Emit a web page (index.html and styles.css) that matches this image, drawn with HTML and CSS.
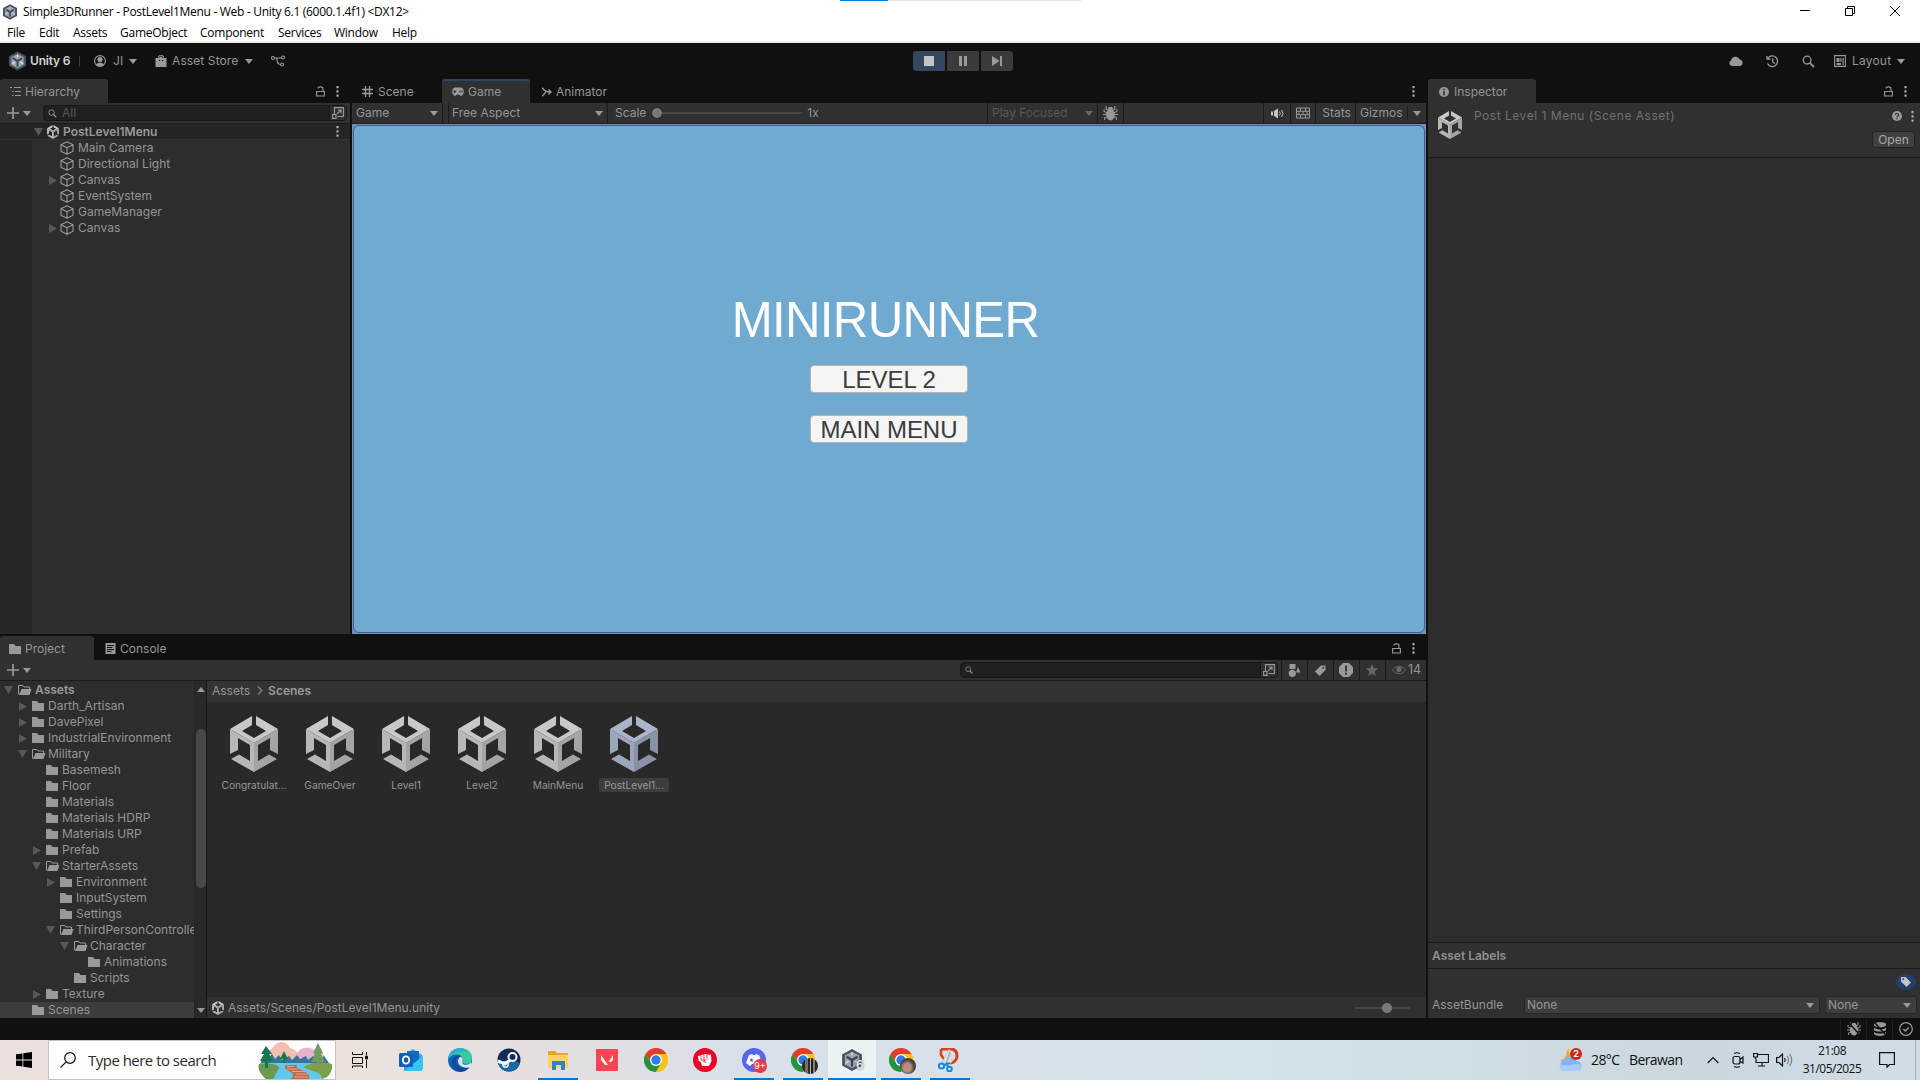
FILE: index.html
```html
<!DOCTYPE html>
<html lang="en">
<head>
<meta charset="utf-8">
<title>Simple3DRunner - PostLevel1Menu</title>
<link rel="stylesheet" href="styles.css">
</head>
<body>
<svg class="defs" aria-hidden="true">
  <symbol id="unity" viewBox="0 0 48 56"><path class="f-top" d="M0 13 22 0V9L12 15 24 22 36 15 26 9V0L48 13 24 27Z"/><path class="f-left" d="M0 13 24 27V56L1 43 9 38.500 20 45V29L8 22V34L0 38Z"/><path class="f-right" d="M48 13 24 27V56L47 43 39 38.500 28 45V29L40 22V34L48 38Z"/></symbol>
  <symbol id="hub" viewBox="0 0 18 20"><path d="M9 0 18 5V15L9 20 0 15V5Z" fill="#49535e"/><path d="M9 2.500 15.500 6V14L9 17.500 2.500 14V6Z" fill="#9aa5b0"/><path d="M9 10V16M9 10 4 7M9 10 14 7" stroke="#3c4650" stroke-width="2"/><path d="M9 3v3M3 13l3-2M15 13l-3-2" stroke="#dde4ea" stroke-width="1.200"/></symbol>
  <symbol id="down" viewBox="0 0 8 5"><path d="M0 0H8L4 5Z" fill="currentColor"/></symbol>
  <symbol id="right" viewBox="0 0 8 9"><path d="M0 0V9L8 4.500Z" fill="currentColor"/></symbol>
  <symbol id="open" viewBox="0 0 9 8"><path d="M0 0H9L4.500 8Z" fill="currentColor"/></symbol>
  <symbol id="kebab" viewBox="0 0 3 11"><path d="M0.500 0h2v2.300h-2zM0.500 4.200h2v2.300h-2zM0.500 8.500h2v2.300h-2z" fill="currentColor"/></symbol>
  <symbol id="lock" viewBox="0 0 9 11"><path d="M.6 5.500H8.400V10H.6ZM2 2.500C2 .3 7 .3 7 2.500V5.500" fill="none" stroke="currentColor" stroke-width="1.100"/></symbol>
  <symbol id="plus" viewBox="0 0 12 12"><path d="M6 0V12M0 6H12" stroke="currentColor" stroke-width="1.700"/></symbol>
  <symbol id="cube" viewBox="0 0 14 14"><path d="M7 .7 13 3.700V10.300L7 13.300 1 10.300V3.700ZM1 3.700 7 6.700 13 3.700M7 6.700V13.300" fill="none" stroke="currentColor" stroke-width="1.100" stroke-linejoin="round"/></symbol>
  <symbol id="folder" viewBox="0 0 12 10"><path d="M0 0H5L6.500 2H12V10H0Z" fill="currentColor"/></symbol>
  <symbol id="folder-open" viewBox="0 0 14 10"><path d="M.5 9.500V.5H5L6 2H11.500V4" fill="none" stroke="currentColor"/><path d="M3.500 4H13.500L11.500 10H1Z" fill="currentColor"/></symbol>
  <symbol id="picker" viewBox="0 0 12 12"><path d="M2.500 7V.6H11.400V9.500H5.500M.6 7.500H4V11.400H.6ZM5 7 8.700 3.300M5.700 3H9V6.300" fill="none" stroke="currentColor" stroke-width="1.100"/></symbol>
  <symbol id="mag" viewBox="0 0 14 14"><circle cx="5.500" cy="5.500" r="4.200" fill="none" stroke="currentColor" stroke-width="1.400"/><path d="M8.500 8.500 13 13" stroke="currentColor" stroke-width="2"/></symbol>
  <symbol id="user" viewBox="0 0 12 12"><circle cx="6" cy="6" r="5.400" fill="none" stroke="currentColor" stroke-width="1.100"/><circle cx="6" cy="4.600" r="2.600" fill="currentColor"/><path d="M2 9.500C3 7 9 7 10 9.500 8 12 4 12 2 9.500Z" fill="currentColor"/></symbol>
  <symbol id="bag" viewBox="0 0 11 12"><path d="M0 3H2.500V2C2.500-.6 8.500-.6 8.500 2V3H11V12H0Z" fill="currentColor"/><path d="M3.500 3C3.500.6 7.500.6 7.500 3" stroke="#101010" fill="none"/><path d="M3.500 5.500h1.200M6.500 5.500h1.200" stroke="#101010"/></symbol>
  <symbol id="branch" viewBox="0 0 14 12"><g fill="none" stroke="currentColor" stroke-width="1.100"><circle cx="2" cy="3" r="1.500"/><circle cx="12" cy="2.500" r="1.500"/><circle cx="11" cy="9.500" r="1.500"/><path d="M3.500 3H10.500M5.500 3 7 8.500 9.500 9.500"/></g></symbol>
  <symbol id="list" viewBox="0 0 11 9"><path d="M0 .5H2M4 .5H11M2 4.500H3.500M5 4.500H11M2 8.500H3.500M5 8.500H11" stroke="currentColor" stroke-width="1.200"/></symbol>
  <symbol id="grid" viewBox="0 0 11 11"><path d="M3.500 0V11M7.500 0V11M0 3.500H11M0 7.500H11" stroke="currentColor" stroke-width="1.300"/></symbol>
  <symbol id="pad" viewBox="0 0 14 9"><path d="M3.500 0H10.500A3.500 4.500 0 0 1 10.500 8.500C9 8.500 9 7 7 7S5 8.500 3.500 8.500A3.500 4.500 0 0 1 3.500 0Z" fill="currentColor"/><path d="M2.200 4.200H5.200M3.700 2.700V5.700M9 3v2M11 3v2" stroke="#303030" stroke-width="1.100"/></symbol>
  <symbol id="anim" viewBox="0 0 10 10"><path d="M0 .8C3 4 4 5 9 5M0 9.200C2 8 2.500 6 4 5M6.500 2.500 9 5 6.500 7.500" fill="none" stroke="currentColor" stroke-width="1.300"/></symbol>
  <symbol id="bug" viewBox="0 0 14 14"><ellipse cx="7" cy="8" rx="4" ry="5.500" fill="currentColor"/><path d="M4.500 3C5 0 9 0 9.500 3Z" fill="currentColor"/><path d="M3 0V3L5 4M11 0V3L9 4M0 8H14M1 3V5L4 6.500M13 3V5L10 6.500M1.500 13V11L4 10M12.500 13V11L10 10" stroke="currentColor" fill="none"/></symbol>
  <symbol id="sound" viewBox="0 0 13 10"><path d="M0 3H2V7H0ZM3 2.500 7 0V10L3 7.500Z" fill="currentColor"/><path d="M8.500 3Q10 5 8.500 7M10.500 1.500Q13.500 5 10.500 8.500" fill="none" stroke="currentColor"/></symbol>
  <symbol id="keys" viewBox="0 0 14 11"><path d="M.5 .5H13.500V10.500H.5ZM.5 3.800H13.500M.5 7.200H13.500M4.500 .5V3.800M9.500 .5V3.800M3 3.800V7.200M7 3.800V7.200M11 3.800V7.200M4.500 7.200V10.500M9.500 7.200V10.500" fill="none" stroke="currentColor"/></symbol>
  <symbol id="cloud" viewBox="0 0 14 10"><path d="M3 10A3 3 0 0 1 2.200 4.300 4.500 4.500 0 0 1 10.700 3.500 3.300 3.300 0 0 1 11 10Z" fill="currentColor"/></symbol>
  <symbol id="history" viewBox="0 0 13 12"><path d="M1.700 3A5.300 5.300 0 1 1 1.500 8M1 .5V3.500H4.500M6.700 3V6.500L9 8" fill="none" stroke="currentColor" stroke-width="1.300"/></symbol>
  <symbol id="layout" viewBox="0 0 12 12"><path d="M.6 .6H11.400V11.400H.6Z" fill="none" stroke="currentColor" stroke-width="1.100"/><path d="M2.500 3H5.500V7H2.500ZM2.500 8H7V10H2.500ZM6.300 3H7.500V7H6.300ZM8.500 3H9.700V10H8.500Z" fill="currentColor"/></symbol>
  <symbol id="info" viewBox="0 0 10 10"><circle cx="5" cy="5" r="5" fill="currentColor"/><path d="M5 1.800V3.200M5 4.200V8.200" stroke="#303030" stroke-width="1.600"/></symbol>
  <symbol id="help" viewBox="0 0 10 10"><circle cx="5" cy="5" r="5" fill="currentColor"/><path d="M3.300 4C3.300 2 6.700 2 6.700 4 6.700 5 5 5 5 6.200M5 7V8.200" stroke="#303030" stroke-width="1.200" fill="none"/></symbol>
  <symbol id="console" viewBox="0 0 10 11"><path d="M0 0H10V11H0Z" fill="currentColor"/><path d="M1.500 2.500H8.500M1.500 4.500H7M1.500 6.500H8.500M1.500 8.500H6" stroke="#101010"/></symbol>
  <symbol id="shapes" viewBox="0 0 12 13"><path d="M1 0H7V5H1ZM9.500 3 12 8.500H7.500Z" fill="currentColor"/><circle cx="3.800" cy="9.300" r="3.600" fill="currentColor"/></symbol>
  <symbol id="tag" viewBox="0 0 11 11"><path d="M0 6.500 6 .5H10.500V5L4.500 11Z" fill="currentColor"/><circle cx="8.300" cy="2.700" r="1" fill="#333"/></symbol>
  <symbol id="alert" viewBox="0 0 14 14"><path d="M4 0H10L14 4V10L10 14H4L0 10V4Z" fill="currentColor"/><path d="M7 2.500V8.500M7 9.800V11.800" stroke="#303030" stroke-width="1.800"/></symbol>
  <symbol id="star" viewBox="0 0 12 12"><path d="M6 0 7.700 4.300 12 4.600 8.700 7.500 9.700 12 6 9.500 2.300 12 3.300 7.500 0 4.600 4.300 4.300Z" fill="currentColor"/></symbol>
  <symbol id="eye" viewBox="0 0 14 9"><path d="M.6 4.500C3.500-.4 10.500-.4 13.400 4.500 10.500 9.400 3.500 9.400.6 4.500Z" fill="none" stroke="currentColor"/><circle cx="7" cy="4" r="2.700" fill="currentColor"/></symbol>
  <symbol id="db" viewBox="0 0 14 14"><path d="M1 2C1-.3 13-.3 13 2V3.500C11 6 3 6 1 3.500ZM1 5.500C3 8 11 8 13 5.500V8C11 10 3 10 1 8ZM1 10C3 12 11 12 13 10V12C11 14.500 3 14.500 1 12Z" fill="currentColor"/><path d="M1 0 14 14" stroke="#101010" stroke-width="1.500"/></symbol>
  <symbol id="check" viewBox="0 0 14 14"><circle cx="7" cy="7" r="6.300" fill="none" stroke="currentColor" stroke-width="1.200"/><path d="M4.300 7 6.300 9 9.700 5.500" fill="none" stroke="currentColor" stroke-width="1.500"/></symbol>
  <symbol id="chrome" viewBox="0 0 24 24"><circle cx="12" cy="12" r="12" fill="#fbc116"/><path d="M1.600 6A12 12 0 0 1 22.400 6H12L6.800 15Z" fill="#e33b2e"/><path d="M1.600 6A12 12 0 0 0 12 24L17.200 15 12 12H5Z" fill="#229342"/><path d="M12 6H22.400A12 12 0 0 1 12 24L17.200 15Z" fill="#fbc116"/><circle cx="12" cy="12" r="6" fill="#fff"/><circle cx="12" cy="12" r="4.700" fill="#2d7de9"/></symbol>
</svg>

<header class="window-top">
  <div class="progress"><i></i></div>
  <div class="titlebar">
    <svg class="app-icon"><use href="#hub"/></svg>
    <span class="title">Simple3DRunner - PostLevel1Menu - Web - Unity 6.1 (6000.1.4f1) &lt;DX12&gt;</span>
    <div class="window-buttons">
      <svg viewBox="0 0 10 10"><path d="M0 4.500H10"/></svg>
      <svg viewBox="0 0 10 10"><path d="M.5 2.500H7.500V9.500H.5ZM2.500 2.500V.5H9.500V7.500H7.500"/></svg>
      <svg viewBox="0 0 10 10"><path d="M0 0 10 10M10 0 0 10"/></svg>
    </div>
  </div>
  <nav class="menubar"><span>File</span><span>Edit</span><span>Assets</span><span>GameObject</span><span>Component</span><span>Services</span><span>Window</span><span>Help</span></nav>
</header>

<div class="toolbar">
  <div class="tool-left">
    <svg class="i-hub"><use href="#hub"/></svg><b>Unity 6</b><i class="bar"></i>
    <svg class="i12"><use href="#user"/></svg><span>JI</span><svg class="down"><use href="#down"/></svg>
    <svg class="i12"><use href="#bag"/></svg><span>Asset Store</span><svg class="down"><use href="#down"/></svg>
    <svg class="i14"><use href="#branch"/></svg>
  </div>
  <div class="play">
    <button class="on"><svg viewBox="0 0 10 10"><rect width="10" height="10" rx=".5"/></svg></button>
    <button><svg viewBox="0 0 10 10"><path d="M1 0H4V10H1ZM6 0H9V10H6Z"/></svg></button>
    <button><svg viewBox="0 0 10 10"><path d="M0 0 7.500 5 0 10ZM8 0H10V10H8Z"/></svg></button>
  </div>
  <div class="tool-right">
    <svg class="i14"><use href="#cloud"/></svg><svg class="i13"><use href="#history"/></svg><svg class="i13"><use href="#mag"/></svg>
    <svg class="i12"><use href="#layout"/></svg><span>Layout</span><svg class="down"><use href="#down"/></svg>
  </div>
</div>

<main class="editor">
  <div class="left-area">
    <div class="upper">
      <section class="hierarchy">
        <div class="tabs">
          <div class="tab tab-hier"><svg class="i11"><use href="#list"/></svg>Hierarchy</div>
          <div class="tab-tools"><svg class="lock"><use href="#lock"/></svg><svg class="kebab"><use href="#kebab"/></svg></div>
        </div>
        <div class="subbar">
          <svg class="plus"><use href="#plus"/></svg><svg class="down"><use href="#down"/></svg>
          <div class="search"><svg class="i9"><use href="#mag"/></svg><span>All</span><div class="pick"><svg class="i12"><use href="#picker"/></svg></div></div>
        </div>
        <div class="scene-row"><svg class="opened"><use href="#open"/></svg><svg class="unity-s"><use href="#unity"/></svg><b>PostLevel1Menu</b><svg class="kebab"><use href="#kebab"/></svg></div>
        <div class="objects">
          <div class="gutter"></div>
          <ul>
            <li><svg class="i14"><use href="#cube"/></svg>Main Camera</li>
            <li><svg class="i14"><use href="#cube"/></svg>Directional Light</li>
            <li class="parent"><svg class="closed"><use href="#right"/></svg><svg class="i14"><use href="#cube"/></svg>Canvas</li>
            <li><svg class="i14"><use href="#cube"/></svg>EventSystem</li>
            <li><svg class="i14"><use href="#cube"/></svg>GameManager</li>
            <li class="parent"><svg class="closed"><use href="#right"/></svg><svg class="i14"><use href="#cube"/></svg>Canvas</li>
          </ul>
        </div>
      </section>

      <section class="game">
        <div class="tabs">
          <div class="tab tab-scene"><svg class="i11"><use href="#grid"/></svg>Scene</div>
          <div class="tab tab-game"><svg class="i14"><use href="#pad"/></svg>Game</div>
          <div class="tab tab-anim"><svg class="i10"><use href="#anim"/></svg>Animator</div>
          <div class="tab-tools"><svg class="kebab"><use href="#kebab"/></svg></div>
        </div>
        <div class="game-bar">
          <div class="cell c-game">Game<svg class="down"><use href="#down"/></svg></div>
          <div class="cell c-gap"></div>
          <div class="cell c-aspect">Free Aspect<svg class="down"><use href="#down"/></svg></div>
          <div class="cell c-scale">Scale<div class="slider"></div>1x</div>
          <div class="cell c-play">Play Focused<svg class="down"><use href="#down"/></svg></div>
          <div class="cell c-bug"><svg class="i15"><use href="#bug"/></svg></div>
          <div class="cell c-space"></div>
          <div class="cell c-icon"><svg class="i13 bright"><use href="#sound"/></svg></div>
          <div class="cell c-keys"><svg class="i14"><use href="#keys"/></svg></div>
          <div class="cell c-stats">Stats</div>
          <div class="cell c-giz">Gizmos<i></i><svg class="down"><use href="#down"/></svg></div>
        </div>
        <div class="viewport">
          <div class="screen">
            <h1>MINIRUNNER</h1>
            <button>LEVEL 2</button>
            <button>MAIN MENU</button>
          </div>
        </div>
      </section>
    </div>

    <section class="project">
      <div class="tabs">
        <div class="tab tab-project"><svg class="folder"><use href="#folder"/></svg>Project</div>
        <div class="tab tab-console"><svg class="i11"><use href="#console"/></svg>Console</div>
        <div class="tab-tools"><svg class="lock"><use href="#lock"/></svg><svg class="kebab"><use href="#kebab"/></svg></div>
      </div>
      <div class="subbar">
        <svg class="plus"><use href="#plus"/></svg><svg class="down"><use href="#down"/></svg>
        <div class="search wide"><svg class="i8"><use href="#mag"/></svg><div class="pick"><svg class="i12"><use href="#picker"/></svg></div></div>
        <div class="filters">
          <div><svg class="i13"><use href="#shapes"/></svg></div><div><svg class="i11"><use href="#tag"/></svg></div><div><svg class="i14"><use href="#alert"/></svg></div><div class="dim"><svg class="i12"><use href="#star"/></svg></div><div class="count"><svg class="i14"><use href="#eye"/></svg>14</div>
        </div>
      </div>
      <div class="project-body">
        <ul class="tree">
          <li class="d0"><svg class="opened"><use href="#open"/></svg><svg class="folder-open"><use href="#folder-open"/></svg><b>Assets</b></li>
          <li class="d1"><svg class="closed"><use href="#right"/></svg><svg class="folder"><use href="#folder"/></svg>Darth_Artisan</li>
          <li class="d1"><svg class="closed"><use href="#right"/></svg><svg class="folder"><use href="#folder"/></svg>DavePixel</li>
          <li class="d1"><svg class="closed"><use href="#right"/></svg><svg class="folder"><use href="#folder"/></svg>IndustrialEnvironment</li>
          <li class="d1"><svg class="opened"><use href="#open"/></svg><svg class="folder-open"><use href="#folder-open"/></svg>Military</li>
          <li class="d2"><i></i><svg class="folder"><use href="#folder"/></svg>Basemesh</li>
          <li class="d2"><i></i><svg class="folder"><use href="#folder"/></svg>Floor</li>
          <li class="d2"><i></i><svg class="folder"><use href="#folder"/></svg>Materials</li>
          <li class="d2"><i></i><svg class="folder"><use href="#folder"/></svg>Materials HDRP</li>
          <li class="d2"><i></i><svg class="folder"><use href="#folder"/></svg>Materials URP</li>
          <li class="d2"><svg class="closed"><use href="#right"/></svg><svg class="folder"><use href="#folder"/></svg>Prefab</li>
          <li class="d2"><svg class="opened"><use href="#open"/></svg><svg class="folder-open"><use href="#folder-open"/></svg>StarterAssets</li>
          <li class="d3"><svg class="closed"><use href="#right"/></svg><svg class="folder"><use href="#folder"/></svg>Environment</li>
          <li class="d3"><i></i><svg class="folder"><use href="#folder"/></svg>InputSystem</li>
          <li class="d3"><i></i><svg class="folder"><use href="#folder"/></svg>Settings</li>
          <li class="d3"><svg class="opened"><use href="#open"/></svg><svg class="folder-open"><use href="#folder-open"/></svg>ThirdPersonController</li>
          <li class="d4"><svg class="opened"><use href="#open"/></svg><svg class="folder-open"><use href="#folder-open"/></svg>Character</li>
          <li class="d5"><i></i><svg class="folder"><use href="#folder"/></svg>Animations</li>
          <li class="d4"><i></i><svg class="folder"><use href="#folder"/></svg>Scripts</li>
          <li class="d2"><svg class="closed"><use href="#right"/></svg><svg class="folder"><use href="#folder"/></svg>Texture</li>
          <li class="d1 selected"><i></i><svg class="folder"><use href="#folder"/></svg>Scenes</li>
        </ul>
        <div class="scrollbar"><svg class="down up"><use href="#down"/></svg><div class="thumb"></div><svg class="down"><use href="#down"/></svg></div>
        <div class="assets">
          <div class="crumbs"><span>Assets</span><svg viewBox="0 0 6 9"><path d="M1 .5 5 4.500 1 8.500"/></svg><b>Scenes</b></div>
          <div class="tiles">
            <figure><svg><use href="#unity"/></svg><figcaption>Congratulat...</figcaption></figure>
            <figure><svg><use href="#unity"/></svg><figcaption>GameOver</figcaption></figure>
            <figure><svg><use href="#unity"/></svg><figcaption>Level1</figcaption></figure>
            <figure><svg><use href="#unity"/></svg><figcaption>Level2</figcaption></figure>
            <figure><svg><use href="#unity"/></svg><figcaption>MainMenu</figcaption></figure>
            <figure class="picked"><svg><use href="#unity"/></svg><figcaption>PostLevel1...</figcaption></figure>
          </div>
          <div class="path"><svg class="unity-s"><use href="#unity"/></svg><span>Assets/Scenes/PostLevel1Menu.unity</span><div class="zoom"></div></div>
        </div>
      </div>
    </section>
  </div>

  <section class="inspector">
    <div class="tabs">
      <div class="tab tab-insp"><svg class="i10"><use href="#info"/></svg>Inspector</div>
      <div class="tab-tools"><svg class="lock"><use href="#lock"/></svg><svg class="kebab"><use href="#kebab"/></svg></div>
    </div>
    <div class="insp-head">
      <svg class="unity-m"><use href="#unity"/></svg>
      <span class="insp-title">Post Level 1 Menu (Scene Asset)</span>
      <div class="insp-side"><div><svg class="i10"><use href="#help"/></svg><svg class="kebab"><use href="#kebab"/></svg></div><button>Open</button></div>
    </div>
    <div class="insp-body"></div>
    <div class="labels-head">Asset Labels</div>
    <div class="labels">
      <div class="badge-row"><span><svg viewBox="0 0 10 10"><path d="M0 0H4.500L10 5.500 5.500 10 0 4.500Z"/><circle cx="2.200" cy="2.200" r=".9"/></svg></span></div>
      <div class="bundle"><span>AssetBundle</span><div class="select">None<svg class="down"><use href="#down"/></svg></div><div class="select">None<svg class="down"><use href="#down"/></svg></div></div>
    </div>
  </section>
</main>

<div class="status"><div><svg viewBox="0 0 14 14"><use href="#bug"/><path d="M1 0 14 14" stroke="#101010" stroke-width="1.500"/></svg></div><div><svg><use href="#db"/></svg></div><div><svg><use href="#check"/></svg></div></div>

<footer class="taskbar">
  <div class="start"><svg viewBox="0 0 16 16"><path d="M0 2.300 6.500 1.400V7.600H0ZM7.300 1.300 16 0V7.600H7.300ZM0 8.400H6.500V14.600L0 13.700ZM7.300 8.400H16V16L7.300 14.700Z"/></svg></div>
  <div class="find">
    <svg class="find-icon" viewBox="0 0 16 16"><circle cx="10" cy="6" r="5.300"/><path d="M6.200 9.800.5 15.500"/></svg>
    <span>Type here to search</span>
    <svg class="scenery" viewBox="0 0 74 38"><path d="M6 17C8 9 13 10 16 5 20-1 29 0 32 7 38 8 40 14 43 12 46 5 54 5 58 12 64 9 68 15 68 20V24H4Z" fill="#f2bfb1"/><path d="M38 14C42 5 54 4 58 13L64 21H35Z" fill="#e4b3cc"/><path d="M3 19 8 14 10 18 14 13 17 18 21 14 24 19 31 15 34 19 39 14 42 18 48 15 50 19 55 15 60 20 66 15 71 22V28H3Z" fill="#37749a"/><path d="M2 22H72L73 29 62 38H8L1 29Z" fill="#62c8ed"/><path d="M1 23C14 21 25 25 20 29L15 38H8C3 34-1 28 1 23Z" fill="#6b9950"/><path d="M45 26C54 20 68 21 74 23 75 32 69 38 63 38 66 31 54 31 45 26Z" fill="#7e9e4a"/><path d="M28 24H39C35 29 54 29 51 38H32C43 31 22 30 28 24Z" fill="#b96d51"/><path d="M29 25.500H36M29 28H40M34 30.500H47M38 33H50M36 36H50" stroke="#e8a584"/><path d="M8 5 14 13H11L15 20H10V27H7V20H2L6 13H3ZM26 10 30 18H27V22H25V18H22Z" fill="#13794e"/><path d="M60 2 65 12 63 13 67 21H61V27H59V21H53L57 13 55 12Z" fill="#6d9b63"/></svg>
  </div>
  <div class="apps">
    <div class="task-view"><svg class="view" viewBox="0 0 16 16"><path d="M.5 0V2.500H10.500V0M.5 5.500H10.500V11.500H.5ZM.5 16V14H10.500V16M14.500 0V3M14.500 8V16"/><path d="M13.500 4H15.500V7H13.500Z" fill="#111"/></svg></div>
    <div><svg viewBox="0 0 24 24"><path d="M5 7 14 1 23 7V23H5Z" fill="#28a8ea"/><path d="M8 3H20V15H8Z" fill="#0f6cbd"/><path d="M24 8V20Q24 23 21 23H6L14 16Z" fill="#36c5f0"/><rect y="5" width="14" height="14" rx="1.500" fill="#0f5fb8"/><ellipse cx="7" cy="12" rx="3.200" ry="3.700" fill="none" stroke="#fff" stroke-width="1.800"/></svg></div>
    <div><svg viewBox="0 0 24 24"><circle cx="12" cy="12" r="12" fill="#0c66c0"/><path d="M0 11C2-4 24-3 24 10 24 16 18 17 15 15 13 14 16 12 14 9 11 5 3 6 0 11Z" fill="#39c99c"/><path d="M0 12C1 0 14-2 20 4 9 1 2 7 0 12Z" fill="#2caee4"/><path d="M8 12C8 20 16 22 22 18 18 25 8 26 4 18 2 12 7 7 12 8 9 9 8 10 8 12Z" fill="#124a93"/><path d="M12 9C17 9 13 14 15 16 18 18 22 16 23 14L23 19C18 21 10 19 10 13 10 11 11 10 12 9Z" fill="#dbe4ea"/></svg></div>
    <div><svg viewBox="0 0 24 24"><circle cx="12" cy="12" r="11.500" fill="#122b58"/><path d="M1 15A11.500 11.500 0 0 0 23 15L14 11Z" fill="#176aa6"/><circle cx="15.500" cy="9" r="4" fill="none" stroke="#fff" stroke-width="2"/><path d="M1 13 8 16 13 12" stroke="#fff" stroke-width="3" fill="none"/><circle cx="8.500" cy="16.500" r="2.700" fill="none" stroke="#fff" stroke-width="1.300"/></svg></div>
    <div class="run"><svg viewBox="0 0 24 24"><path d="M2 3H9L11 5H22V10H2Z" fill="#e8a915"/><path d="M2 7H22V20H2Z" fill="#ffd363"/><path d="M6 13H19V22H15V17H10V22H6Z" fill="#2c83cc"/></svg></div>
    <div><svg viewBox="0 0 24 24"><rect x="1" y="1" width="22" height="22" fill="#fa4454"/><path d="M6 7 13 17H10L6 12ZM18 7V12L16 14H13.500Z" fill="#fff4e8"/></svg></div>
    <div><svg><use href="#chrome"/></svg></div>
    <div><svg viewBox="0 0 24 24"><circle cx="12" cy="12" r="12" fill="#eb0029"/><path d="M5 8 8 7.500V6.800H11V6.300H14V6.800L18 6.500 18.500 13 16 18H9L8 14.500 5.500 12.500Z" fill="#fff"/><path d="M8 7.500V11.500M11 7V11.500M14 7V11.500M7.500 12H12.500L10.500 13.500 13 14.500" stroke="#eb0029" stroke-width=".8" fill="none"/></svg></div>
    <div class="run"><svg viewBox="0 0 24 24"><circle cx="12" cy="12" r="12" fill="#5865f2"/><path d="M7 7 10 6 11 7H13L14 6 17 7 20 15 16 18 14 16H10L8 18 4 15Z" fill="#fff"/><circle cx="9.500" cy="12" r="1.500" fill="#5865f2"/></svg><em class="unread">9+</em></div>
    <div class="run"><svg><use href="#chrome"/></svg><em class="avatar pillar"></em></div>
    <div class="run active"><svg class="hub-app"><use href="#hub"/></svg><em class="six">6</em></div>
    <div class="run"><svg><use href="#chrome"/></svg><em class="avatar face"></em></div>
    <div class="run"><svg viewBox="0 0 24 24"><path d="M3 1H12C17 1 19 4 19 8S16 15 12 15" fill="none" stroke="#d3451a" stroke-width="3"/><path d="M3 1V7L6 11" fill="none" stroke="#d3451a" stroke-width="2.500"/><path d="M11 1 14 14 10 17 5 13Z" fill="#e3e3e3" stroke="#bbb" stroke-width=".5"/><path d="M12 4 8 16" stroke="#aaa" stroke-width="1.500"/><circle cx="3.500" cy="18" r="2.600" fill="none" stroke="#1588d8" stroke-width="2"/><circle cx="11.500" cy="21" r="2.300" fill="none" stroke="#1588d8" stroke-width="2"/><path d="M6 17 12 15M10 19 8 15" stroke="#1588d8" stroke-width="2"/></svg></div>
  </div>
  <div class="tray">
    <div class="weather"><svg viewBox="0 0 24 24"><path d="M11 0C7 3 10 12 2 12 8 18 20 16 20 8 14 11 10 7 11 0Z" fill="#f6aa1d"/><path d="M6 23A5.500 5.500 0 0 1 5 13 7 7 0 0 1 18 13 5 5 0 0 1 19 23Z" fill="#86b3f5"/><path d="M6 23A5 5 0 0 1 2 16C8 20 17 14 23 17 23 21 22 23 19 23Z" fill="#a8cafc"/></svg><em>2</em></div>
    <span class="temp">28°C</span><span class="sky">Berawan</span>
    <svg class="t-up" viewBox="0 0 12 8"><path d="M.7 7 6 1.500 11.300 7"/></svg>
    <svg class="t-cam" viewBox="0 0 12 16"><rect x="1" y="4.500" width="7" height="7.500" rx="2"/><path d="M8 7.500 11 5V11L8 9.500M2 1.500Q5 0 8 1.500M2 14.500Q5 16 8 14.500"/></svg>
    <svg class="t-net" viewBox="0 0 16 14"><path d="M5 1.500H15.500V9.500H3V6M9 9.500V13M5 13H12M.5 .5H4.500V4H.5ZM2.500 4V6"/></svg>
    <svg class="t-vol" viewBox="0 0 17 14"><path d="M.6 4.500H3L6.500 1V13L3 9.500H.6Z"/><path d="M8.500 5Q10 7 8.500 9"/><path opacity=".45" d="M11 3Q14 7 11 11M13.500 1Q18 7 13.500 13"/></svg>
    <div class="clock"><span>21:08</span><span>31/05/2025</span></div>
    <svg class="t-note" viewBox="0 0 16 16"><path d="M.6 .6H15.400V12.500H10.500L8 15.300V12.500H.6Z"/></svg>
    <i class="peek"></i>
  </div>
</footer>
</body>
</html>
```
FILE: styles.css
```css
* { box-sizing: border-box; }
body { margin: 0; width: 1920px; height: 1080px; overflow: hidden; display: flex; flex-direction: column; background: #101010; color: #959595; font: 12px/16px Inter, "Liberation Sans", sans-serif; }
svg { display: block; flex: none; }
button { font: inherit; color: inherit; border: 0; padding: 0; margin: 0; }
ul { list-style: none; margin: 0; padding: 0; }
b { font-weight: 600; }
.defs { position: absolute; width: 0; height: 0; }
.f-top { fill: var(--top, #c8c8c8); }
.f-left { fill: var(--left, #b7b7b7); }
.f-right { fill: var(--right, #a4a4a4); }

/* Icon sizes */
.i8 { width: 8px; height: 8px; } .i9 { width: 9px; height: 9px; }
.i10 { width: 10px; height: 10px; } .i11 { width: 11px; height: 11px; }
.i12 { width: 12px; height: 12px; } .i13 { width: 13px; height: 13px; }
.i14 { width: 14px; height: 14px; } .i15 { width: 15px; height: 15px; }
svg { color: #999; }
.bright { color: #c4c4c4; }
.down { width: 8px; height: 5px; }
.up { transform: rotate(180deg); }
.closed { width: 8px; height: 9px; color: #585858; }
.opened { width: 9px; height: 8px; color: #585858; }
.kebab { width: 3px; height: 11px; color: #b5b5b5; }
.lock { width: 9px; height: 11px; }
.plus { width: 12px; height: 12px; }
.folder { width: 12px; height: 10px; }
.folder-open { width: 14px; height: 10px; }
.unity-s { width: 12px; height: 14px; }
.unity-m { width: 24px; height: 28px; }

/* Title and menu */
.window-top { height: 43px; background: #fff; border-bottom: 2px solid #f0f0f0; color: #000; font-family: "Open Sans", "Noto Sans", sans-serif; flex: none; }
.progress { width: 241px; height: 1px; margin-left: 840px; background: #e5e5e5; }
.progress i { display: block; width: 48px; height: 1px; background: #0078d7; }
.titlebar { height: 22px; display: flex; align-items: center; padding-left: 3px; }
.app-icon { width: 14px; height: 16px; margin-right: 6px; }
.title { letter-spacing: -.3px; }
.window-buttons { margin: -3px 0 0 auto; display: flex; gap: 35px; padding-right: 20px; }
.window-buttons svg { width: 10px; height: 10px; fill: none; stroke: #000; stroke-width: 1; overflow: visible; }
.menubar { display: grid; grid-template-columns: 32px 34px 47px 80px 78px 56px 58px 40px; padding-left: 7px; height: 18px; line-height: 19px; letter-spacing: -.25px; }

/* Main toolbar */
.toolbar { height: 36px; flex: none; display: grid; grid-template-columns: 913px 100px 1fr; align-items: center; }
.tool-left { display: grid; grid-template-columns: 21px 49px 15px 19px 16px 26px 17px 73px 26px 20px; align-items: center; padding-left: 9px; letter-spacing: .1px; }
.tool-left b { color: #d2d2d2; white-space: nowrap; letter-spacing: -.2px; }
.tool-left span { white-space: nowrap; }
.i-hub { width: 17px; height: 20px; }
.bar { width: 1px; height: 11px; background: #3a3a3a; }
.play { display: flex; gap: 2px; }
.play button { width: 32px; height: 20px; background: #3b3b3b; display: grid; place-items: center; border-radius: 1px; }
.play button:first-child { border-radius: 3px 1px 1px 3px; }
.play button:last-child { border-radius: 1px 3px 3px 1px; }
.play .on { background: #34475f; }
.play svg { width: 10px; height: 10px; fill: #999; }
.play .on svg { fill: #c4c4c4; }
.tool-right { display: grid; grid-template-columns: 37px 36px 32px 18px 45px 8px; align-items: center; justify-content: end; padding-right: 15px; letter-spacing: .2px; }

/* Panels */
.editor { display: grid; grid-template-columns: 1426px 492px; gap: 2px; height: 939px; flex: none; }
.left-area { display: grid; grid-template-rows: 555px 382px; gap: 2px; min-width: 0; }
.upper { display: grid; grid-template-columns: 350px 1074px; gap: 2px; }
.tabs { height: 24px; display: flex; background: #101010; }
.tab { display: flex; align-items: center; padding-top: 1px; height: 24px; font-size: 12px; }
.tab-hier { width: 108px; padding-left: 10px; gap: 4px; background: #303030; border-radius: 3px 3px 0 0; }
.tab-scene { width: 90px; padding-left: 10px; gap: 5px; }
.tab-game { width: 88px; padding-left: 9px; gap: 3px; background: #303030; border-top: 2px solid #264870; border-radius: 3px 3px 0 0; padding-top: 0; height: 24px; }
.tab-anim { padding-left: 12px; gap: 4px; }
.tab-project { width: 94px; padding-left: 9px; gap: 4px; background: #303030; border-radius: 3px 3px 0 0; }
.tab-console { padding-left: 11px; gap: 4px; }
.tab-insp { width: 108px; padding-left: 11px; gap: 5px; background: #303030; border-radius: 3px 3px 0 0; }
.tab-tools { margin-left: auto; display: flex; align-items: center; gap: 11px; padding-right: 11px; }
.inspector .tab-tools { padding-right: 13px; }
.subbar { height: 21px; background: #303030; border-bottom: 1px solid #1b1b1b; display: flex; align-items: center; padding-left: 7px; gap: 4px; }
.search { display: flex; align-items: center; gap: 5px; width: 304px; height: 16px; margin-left: 8px; padding-left: 4px; background: #202020; border: 1px solid #171717; border-radius: 4px; color: #565656; }
.pick { margin-left: auto; width: 17px; height: 14px; background: #303030; border-left: 1px solid #171717; display: grid; place-items: center; border-radius: 0 3px 3px 0; }
.search.wide { width: 318px; margin-left: auto; }

.hierarchy { background: #2d2d2d; display: flex; flex-direction: column; }
.scene-row { height: 16px; background: #252525; border-bottom: 1px solid #363636; display: flex; align-items: center; padding: 0 11px 0 34px; gap: 4px; flex: none; }
.scene-row b { color: #999; }
.scene-row .kebab { margin-left: auto; }
.objects { flex: 1; display: grid; grid-template-columns: 32px 1fr; }
.gutter { background: #272727; }
.objects li { height: 16px; display: flex; align-items: center; gap: 3px; padding-left: 28px; }
.objects li .i14 { margin-right: 1px; }
.objects .parent { padding-left: 17px; }
.objects li { letter-spacing: .02px; }

.game-bar { height: 21px; display: flex; background: #303030; border-bottom: 1px solid #1b1b1b; }
.cell { display: flex; align-items: center; justify-content: space-between; border-right: 1px solid #1b1b1b; white-space: nowrap; flex: none; }
.c-game { width: 91px; padding: 0 4px; }
.c-gap { width: 6px; }
.c-aspect { width: 159px; padding: 0 4px 0 3px; }
.c-scale { width: 380px; padding-left: 7px; justify-content: flex-start; gap: 6px; }
.slider { width: 150px; height: 10px; margin-right: -1px; background: radial-gradient(circle at 5px 5px, #777 4.500px, transparent 5.200px), linear-gradient(#464646, #464646) 5px 4px / 145px 2px no-repeat; }
.c-play { width: 110px; padding: 0 4px 0 4px; color: #575757; }
.c-play svg { color: #666; }
.c-bug { width: 26px; justify-content: center; }
.c-space { width: 140px; }
.c-icon { width: 27px; justify-content: center; }
.c-keys { width: 25px; justify-content: center; }
.c-stats { width: 40px; justify-content: center; padding-left: 2px; }
.c-giz { flex: 1; padding: 0 5px 0 4px; border-right: 0; }
.c-giz i { width: 1px; height: 14px; background: #1b1b1b; }
.viewport { height: 510px; background: #6f8fbd; padding: 1px 0 1px 1px; }
.screen { width: 1072px; height: 508px; background: #70aad1; border: 1px solid #415d7b; border-radius: 6px; display: flex; flex-direction: column; align-items: center; font-family: "Liberation Sans", sans-serif; }
.screen h1 { margin: 166px 7px 0 0; height: 55px; font-weight: 400; font-size: 49.200px; line-height: 56px; letter-spacing: -.65px; color: #fff; }
.screen button { width: 158px; height: 28px; margin-top: 18px; background: #f5f5f5; border: 1px solid #b5b2b0; border-radius: 4px; color: #3c3c3c; font-size: 24px; line-height: 26px; padding-top: 1px; letter-spacing: -.05px; }
.screen button + button { margin-top: 22px; }

.project-body { height: 337px; display: grid; grid-template-columns: 194px 13px 1219px; background: #2d2d2d; }
.tree { padding-top: 1px; overflow: hidden; }
.tree li { height: 16px; display: flex; align-items: center; white-space: nowrap; overflow: hidden; }
.tree li > :first-child { width: 9px; margin-right: 5px; flex: none; }
.tree li > .closed { width: 8px; margin-right: 5px; }
.tree .folder { margin-right: 4px; }
.tree .folder-open { margin-right: 2px; }
.d0 { padding-left: 4px; } .d1 { padding-left: 18px; } .d2 { padding-left: 32px; } .d3 { padding-left: 46px; } .d4 { padding-left: 60px; } .d5 { padding-left: 74px; }
.tree .closed { margin-left: 1px; }
.tree .folder-open + b { margin-left: 1px; color: #999; }
.tree .selected { background: #3d3d3d; }
.scrollbar { display: flex; flex-direction: column; align-items: center; background: #292929; border-left: 1px solid #242424; border-right: 1px solid #171717; padding: 6px 0 5px; }
.scrollbar .thumb { width: 10px; height: 159px; margin: 37px 0 auto; border-radius: 5px; background: #484848; }
.assets { background: #292929; display: flex; flex-direction: column; }
.crumbs { height: 21px; background: #333; display: flex; align-items: center; padding: 0 0 2px 5px; gap: 7px; }
.crumbs b { color: #999; margin-left: -2px; }
.crumbs svg { width: 6px; height: 9px; fill: none; stroke: #888; stroke-width: 1.200; }
.tiles { flex: 1; display: flex; gap: 6px; padding: 14px 0 0 12px; }
figure { margin: 0; width: 70px; display: flex; flex-direction: column; align-items: center; gap: 6px; font-size: 10.200px; line-height: 14px; }
figure svg { width: 48px; height: 56px; }
figcaption { padding: 0 5px; border-radius: 2px; height: 14px; }
.picked { --top: #aab4cc; --left: #9ca6bb; --right: #8a93a6; }
.picked figcaption { background: #3d3d3d; color: #999; }
.path { height: 21px; background: #303030; display: flex; align-items: center; padding: 0 16px 0 5px; gap: 4px; }
.zoom { margin-left: auto; width: 55px; height: 10px; background: radial-gradient(circle at 32px 5px, #777 4.700px, transparent 5.300px), linear-gradient(#464646, #464646) 0 4px / 55px 2px no-repeat; }
.project .subbar { padding-right: 0; }
.filters { display: flex; align-self: stretch; margin-left: -1px; }
.filters > div { width: 26px; border-left: 1px solid #1b1b1b; display: grid; place-items: center; padding-right: 1px; }
.filters .count { width: 41px; display: flex; align-items: center; gap: 2px; padding: 0 0 0 6px; font-size: 12.500px; }
.dim svg, .count svg { color: #666; }

/* Inspector */
.inspector { display: flex; flex-direction: column; background: #2d2d2d; }
.insp-head { height: 55px; background: #303030; border-bottom: 1px solid #1b1b1b; display: flex; padding: 5px 5px 0 10px; }
.insp-head .unity-m { margin-top: 3px; }
.insp-title { margin-left: 12px; color: #707070; letter-spacing: .52px; white-space: nowrap; }
.insp-side { margin-left: auto; display: flex; flex-direction: column; align-items: flex-end; }
.insp-side div { display: flex; align-items: center; gap: 9px; height: 16px; padding-right: 1px; }
.insp-side button { margin-top: 7px; width: 43px; height: 17px; background: #404040; border: 1px solid #222; border-radius: 3px; line-height: 15px; color: #a8a8a8; }
.insp-body { flex: 1; }
.labels-head { height: 27px; border: solid #1b1b1b; border-width: 1px 0; background: #303030; padding-left: 4px; line-height: 25px; font-weight: 600; color: #8f8f8f; font-size: 12px; }
.labels { height: 49px; background: #303030; padding-top: 5px; }
.badge-row { display: flex; justify-content: flex-end; padding-right: 4px; }
.badge-row span { width: 20px; height: 16px; border-radius: 50%; background: #233f6d; display: grid; place-items: center; }
.badge-row svg { width: 10px; height: 10px; fill: #c4c4c4; }
.badge-row circle { fill: #233f6d; }
.bundle { display: grid; grid-template-columns: 92px 296px 92px; padding: 6px 0 0 4px; align-items: center; }
.bundle .select + .select { margin-left: 5px; width: 92px; }
.select { height: 18px; background: #3d3d3d; border: 1px solid #262626; border-radius: 3px; display: flex; justify-content: space-between; align-items: center; padding: 0 5px 0 2px; }

.status { height: 22px; flex: none; display: flex; justify-content: flex-end; padding: 1px 2px 0 0; }
.status div { width: 26px; height: 20px; border-left: 1px solid #202020; display: grid; place-items: center; }
.status svg { width: 14px; height: 14px; }

/* Taskbar */
.taskbar { height: 40px; flex: none; display: flex; color: #111; font-family: "Open Sans", "Noto Sans", sans-serif; background: linear-gradient(90deg, #ecdfdf 0, #ebe2dc 340px, #e4dfe0 540px, #d9e0e9 750px, #d3e2ea 1300px, #cbd7df 1700px, #d0dce6 1920px); }
.start { width: 48px; display: grid; place-items: center; }
.start svg { width: 16px; height: 16px; fill: #000; }
.find { width: 288px; height: 40px; background: #fff; border: 1px solid #c4c4c4; display: flex; align-items: center; padding-left: 11px; font-size: 15px; }
.find-icon { width: 16px; height: 16px; fill: none; stroke: #111; stroke-width: 1.200; margin-right: 12px; }
.find span { color: #2b2b2b; letter-spacing: -.52px; white-space: nowrap; width: 170px; }
.scenery { width: 74px; height: 38px; }
.apps { display: flex; }
.apps > div { width: 49px; height: 40px; display: flex; align-items: center; padding-left: 12px; position: relative; }
.apps > .task-view { width: 51px; padding-left: 16px; }
.apps svg { width: 24px; height: 24px; }
.apps .view { width: 16px; height: 16px; fill: none; stroke: #111; }
.apps .run::after { content: ""; position: absolute; left: 4px; right: 5px; bottom: 0; height: 2px; background: #0078d7; }
.apps .active { background: linear-gradient(90deg, #ecf1f4 48px, transparent 48px); }
.apps .active::after { left: 0; right: 1px; }
.apps em { position: absolute; font-style: normal; }
.unread { width: 14px; height: 14px; border-radius: 50%; left: 23px; top: 19px; background: #e53c42; color: #fff; font: 9px/14px Inter, sans-serif; text-align: center; }
.avatar { width: 16px; height: 16px; border-radius: 50%; left: 23px; top: 18px; }
.pillar { background: linear-gradient(90deg, #302a25 20%, #77716a 20%, #77716a 35%, #302a25 35%, #302a25 48%, #bcb6ad 48%, #bcb6ad 58%, #211c18 58%, #211c18 70%, #8b847a 70%, #777 82%, #2b2723 82%); }
.face { background: radial-gradient(ellipse at 45% 60%, #b98e7c 30%, #4a3d3a 58%); }
.six { left: 28px; top: 18px; color: #e9edf1; font: 600 12px/13px Inter, sans-serif; text-shadow: 0 0 2px #333; }
.apps .hub-app { height: 22px; }
.tray { margin-left: auto; display: flex; align-items: center; }
.tray > svg { fill: none; stroke: #111; stroke-width: 1.200; }
.weather { position: relative; width: 24px; height: 24px; margin-right: 1px; }
.weather svg { width: 24px; height: 24px; }
.weather em { position: absolute; left: 12px; top: 0; width: 12px; height: 12px; border-radius: 50%; background: #c42b1c; color: #fff; font: 600 9px/12px Inter, sans-serif; font-style: normal; text-align: center; }
.temp, .sky { font-size: 14px; letter-spacing: -.6px; white-space: nowrap; }
.temp { width: 30px; margin-left: 8px; }
.sky { width: 54px; margin-left: 8px; }
.t-up { width: 12px; height: 8px; margin-left: 24px; }
.t-cam { width: 12px; height: 16px; margin-left: 13px; }
.t-net { width: 16px; height: 14px; margin-left: 9px; }
.t-vol { width: 17px; height: 14px; margin-left: 7px; }
.clock { width: 70px; margin: 0 0 0 4px; display: flex; flex-direction: column; align-items: center; line-height: 18px; height: 37px; letter-spacing: -.52px; }
.t-note { width: 16px; height: 16px; margin-left: 12px; }
.peek { width: 1px; height: 40px; background: #a5afb6; margin: 0 4px 0 20px; }
```
